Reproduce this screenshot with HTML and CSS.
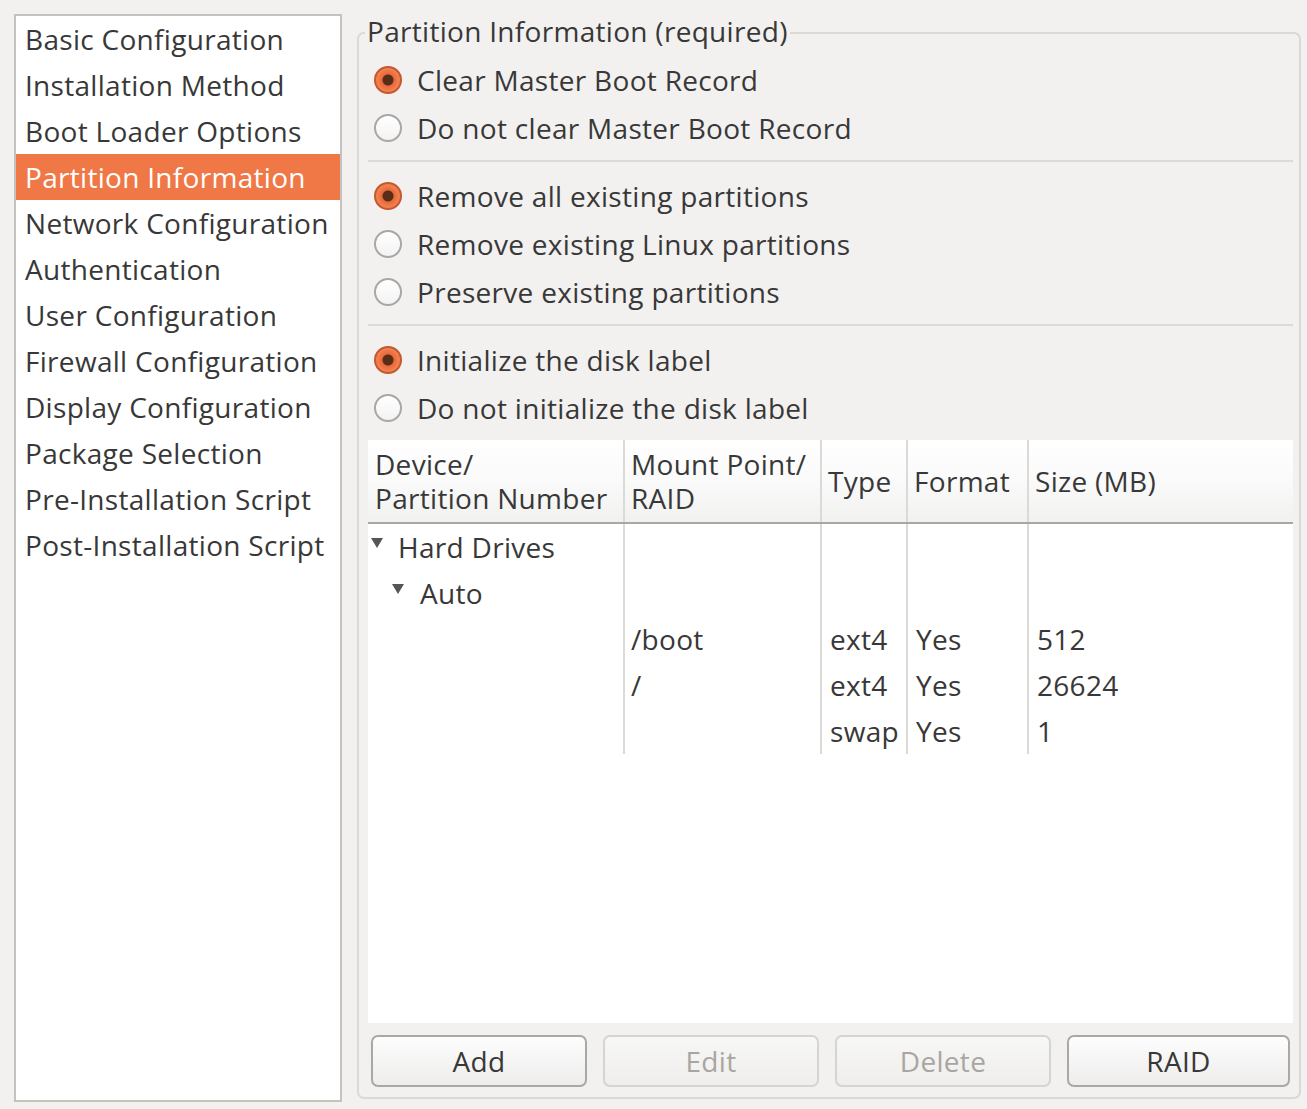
FILE: index.html
```html
<!DOCTYPE html>
<html>
<head>
<meta charset="utf-8">
<link rel="stylesheet" href="styles.css">
</head>
<body>
<div class="window">
  <ul class="sidebar">
    <li class="item">Basic Configuration</li>
    <li class="item">Installation Method</li>
    <li class="item">Boot Loader Options</li>
    <li class="item selected">Partition Information</li>
    <li class="item">Network Configuration</li>
    <li class="item">Authentication</li>
    <li class="item">User Configuration</li>
    <li class="item">Firewall Configuration</li>
    <li class="item">Display Configuration</li>
    <li class="item">Package Selection</li>
    <li class="item">Pre-Installation Script</li>
    <li class="item">Post-Installation Script</li>
  </ul>

  <section class="frame">
    <div class="legend">Partition Information (required)</div>

    <div class="group">
      <label class="radio"><span class="dot checked"></span>Clear Master Boot Record</label>
      <label class="radio"><span class="dot"></span>Do not clear Master Boot Record</label>
    </div>
    <div class="sep"></div>
    <div class="group">
      <label class="radio"><span class="dot checked"></span>Remove all existing partitions</label>
      <label class="radio"><span class="dot"></span>Remove existing Linux partitions</label>
      <label class="radio"><span class="dot"></span>Preserve existing partitions</label>
    </div>
    <div class="sep"></div>
    <div class="group">
      <label class="radio"><span class="dot checked"></span>Initialize the disk label</label>
      <label class="radio"><span class="dot"></span>Do not initialize the disk label</label>
    </div>

    <div class="table">
      <div class="thead">
        <div class="th">Device/<br>Partition Number</div>
        <div class="th">Mount Point/<br>RAID</div>
        <div class="th">Type</div>
        <div class="th">Format</div>
        <div class="th">Size (MB)</div>
      </div>
      <div class="tbody">
        <div class="td"><span class="tree lvl1"><svg class="tri" viewBox="0 0 12 10"><path d="M0 0H12L6 10Z"/></svg>Hard Drives</span></div>
        <div class="td"></div><div class="td"></div><div class="td"></div><div class="td"></div>

        <div class="td"><span class="tree lvl2"><svg class="tri" viewBox="0 0 12 10"><path d="M0 0H12L6 10Z"/></svg>Auto</span></div>
        <div class="td"></div><div class="td"></div><div class="td"></div><div class="td"></div>

        <div class="td"></div>
        <div class="td">/boot</div><div class="td">ext4</div><div class="td">Yes</div><div class="td">512</div>

        <div class="td"></div>
        <div class="td">/</div><div class="td">ext4</div><div class="td">Yes</div><div class="td">26624</div>

        <div class="td"></div>
        <div class="td"></div><div class="td">swap</div><div class="td">Yes</div><div class="td">1</div>
      </div>
    </div>

    <div class="buttons">
      <button class="btn">Add</button>
      <button class="btn" disabled>Edit</button>
      <button class="btn" disabled>Delete</button>
      <button class="btn">RAID</button>
    </div>
  </section>
</div>
</body>
</html>
```

FILE: styles.css
```css
* { box-sizing: border-box; }

html, body {
  margin: 0;
  padding: 0;
  background: #f2f1f0;
}

body {
  font-family: "Open Sans", "DejaVu Sans", sans-serif;
  font-size: 28px;
  letter-spacing: 0.3px;
  color: #383838;
}

.window {
  display: flex;
  align-items: flex-start;
  padding: 14px 0 0 14px;
}

.sidebar {
  list-style: none;
  margin: 0;
  padding: 0;
  width: 328px;
  height: 1088px;
  background: #ffffff;
  border: 2px solid #c5c3be;
}

.item {
  height: 46px;
  line-height: 46px;
  padding-left: 9px;
  white-space: nowrap;
}

.item.selected {
  background: #f07746;
  color: #ffffff;
}

.frame {
  position: relative;
  margin: 18px 0 0 15px;
  width: 944px;
  height: 1067px;
  border: 2px solid #dbd9d5;
  border-radius: 7px;
  padding: 22px 6px 10px 9px;
  display: flex;
  flex-direction: column;
}

.legend {
  position: absolute;
  top: -18px;
  left: 6px;
  padding: 0 2px;
  line-height: 30px;
  background: #f2f1f0;
  white-space: nowrap;
}

.group {
  display: flex;
  flex-direction: column;
}

.radio {
  display: flex;
  align-items: center;
  height: 48px;
  gap: 15px;
  padding-left: 6px;
  white-space: nowrap;
}

.dot {
  flex: none;
  width: 28px;
  height: 28px;
  border-radius: 50%;
  border: 2px solid #a9a7a4;
  background: linear-gradient(#ffffff, #f4f3f2);
}

.dot.checked {
  border-color: #c4582e;
  background: radial-gradient(circle, #5a2d1a 0 5px, #e8693a 6px, #f2804f 11px);
}

.sep {
  height: 2px;
  background: #dcdad6;
  margin: 8px 0 10px 0;
}

.table {
  margin-top: 8px;
  flex: 1;
  background: #ffffff;
  display: flex;
  flex-direction: column;
}

.thead {
  display: grid;
  grid-template-columns: 255px 197px 86px 121px 1fr;
  height: 84px;
  border-bottom: 2px solid #a9a7a3;
  background: linear-gradient(#ffffff 0%, #fafafa 50%, #f1f1f0 100%);
}

.th {
  display: flex;
  align-items: center;
  padding-left: 7px;
  line-height: 34px;
  white-space: nowrap;
}

.th + .th {
  border-left: 2px solid #dcdad7;
  padding-left: 6px;
}

.tbody {
  display: grid;
  grid-template-columns: 255px 197px 86px 121px 1fr;
  grid-auto-rows: 46px;
}

.td {
  line-height: 46px;
  padding-left: 6px;
  white-space: nowrap;
}

.td:nth-child(5n+2),
.td:nth-child(5n+3),
.td:nth-child(5n+4),
.td:nth-child(5n) {
  border-left: 2px solid #dcdad7;
}

.td:nth-child(5n+2) { padding-left: 6px; }
.td:nth-child(5n+3) { padding-left: 8px; }
.td:nth-child(5n+4) { padding-left: 8px; }
.td:nth-child(5n) { padding-left: 8px; }

.td:nth-child(5n+1) { padding-left: 0; }

.tree {
  display: flex;
  align-items: center;
}

.tree.lvl1 { padding-left: 3px; }
.tree.lvl2 { padding-left: 24px; }

.tri {
  width: 12px;
  height: 10px;
  fill: #555555;
  margin-right: 15px;
  margin-top: -8px;
}

.tree.lvl2 .tri { margin-right: 16px; }

.buttons {
  margin: 12px 3px 0 3px;
  display: grid;
  grid-template-columns: 216px 216px 216px 1fr;
  gap: 16px;
}

.btn {
  height: 52px;
  font-family: inherit;
  font-size: 28px;
  letter-spacing: 0.3px;
  color: #383838;
  border: 2px solid #aaa8a4;
  border-radius: 7px;
  background: linear-gradient(#fdfdfd, #eeedec);
  padding: 0;
}

.btn:disabled {
  color: #a9a6a2;
  border-color: #d6d4d0;
  background: linear-gradient(#f7f7f6, #efeeed);
}
```
